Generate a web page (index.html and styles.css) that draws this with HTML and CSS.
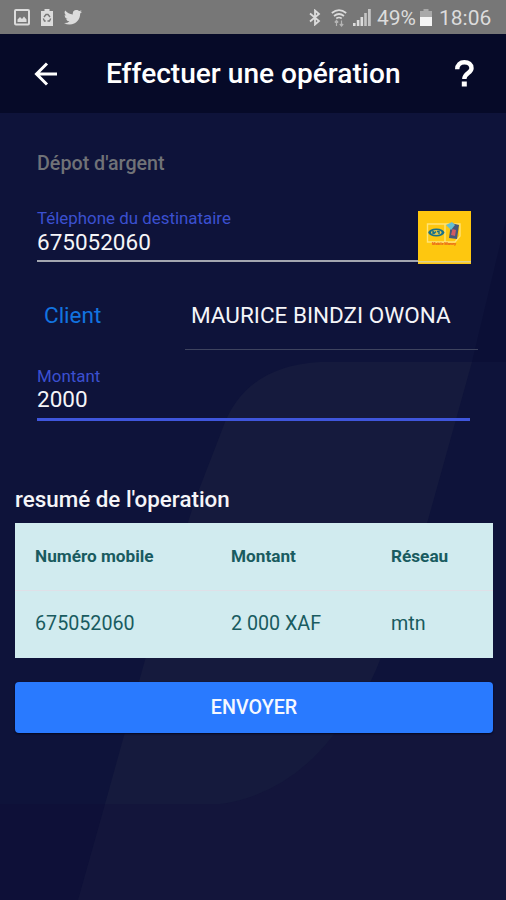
FILE: index.html
```html
<!DOCTYPE html>
<html lang="fr">
<head>
  <meta charset="utf-8">
  <title>Effectuer une opération</title>
  <link rel="stylesheet" href="styles.css">
</head>
<body>

  <svg class="backdrop" width="506" height="900" viewBox="0 0 506 900">
    <path fill="#0b0f36" d="M506 220 L472 362 H506 Z"/>
    <path fill="#0e1038" d="M0 804 H105 L78 900 H0 Z"/>
    <path fill="#13153b" d="M105 804 L145 680 L380 710 H506 V900 H78 Z"/>
    <path fill="#151a3d" d="M320 362 H472 L428 520 L380 660 Q365 700 332 737 Q286 795 220 804 H105 L145 660 L195 500 L222 430 Q244 366 320 362 Z"/>
  </svg>

  <div class="status-bar">
    <svg width="16" height="17" viewBox="0 0 16 17">
      <rect x="1" y="1" width="14" height="14.5" rx="1" fill="none" stroke="#dcdcdc" stroke-width="2"/>
      <path d="M3.5 13 V10.5 L6 8 L8 10 L10 7.5 L12.5 10.5 V13 Z" fill="#dcdcdc"/>
    </svg>
    <svg class="icon-saver" width="12" height="17" viewBox="0 0 12 17">
      <path d="M3.5 0 H8.5 V2 H12 V17 H0 V2 H3.5 Z" fill="#dcdcdc"/>
      <path d="M3 8 L5 5.5 H7 L9 8 M9.7 9.5 L8.5 12 H6.5 M4.7 12 H3.5 L2.3 9.5" fill="none" stroke="#777" stroke-width="1.4"/>
    </svg>
    <svg class="icon-bird" width="18" height="16" viewBox="0 3 24 20">
      <path d="M23.95 4.57a10 10 0 0 1-2.82.77 4.96 4.96 0 0 0 2.16-2.72c-.95.55-2 .95-3.13 1.18a4.92 4.92 0 0 0-8.38 4.48C7.69 8.09 4.07 6.13 1.64 3.16a4.92 4.92 0 0 0 1.52 6.57 4.9 4.9 0 0 1-2.23-.61v.06a4.92 4.92 0 0 0 3.95 4.83 5 5 0 0 1-2.21.08 4.94 4.94 0 0 0 4.6 3.42A9.87 9.87 0 0 1 0 19.54a14 14 0 0 0 7.55 2.21c9.05 0 14-7.5 14-13.98 0-.21 0-.42-.02-.63a9.94 9.94 0 0 0 2.46-2.55z" fill="#dcdcdc"/>
    </svg>
    <div class="status-right">
      <svg width="12" height="17" viewBox="0 0 12 17">
        <path d="M1 4.5 L10 12 L6 15.5 V1.5 L10 5 L1 12.5" fill="none" stroke="#dcdcdc" stroke-width="1.8"/>
      </svg>
      <svg class="icon-wifi" width="16" height="18" viewBox="0 0 16 18">
        <path d="M.8 4 Q8 -1.8 15.2 4 M3 7 Q8 3 13 7 M5.3 9.5 Q8 7.5 10.7 9.5" fill="none" stroke="#dcdcdc" stroke-width="1.7"/>
        <path d="M5.5 11.5 V17 M3.8 13.5 L5.5 11.5 L7.2 13.5 M10.5 11.5 V17 M8.8 15 L10.5 17 L12.2 15" fill="none" stroke="#b5b5b5" stroke-width="1.2"/>
      </svg>
      <svg class="icon-signal" width="18" height="17" viewBox="0 0 18 17">
        <path d="M0 14h2.6v3H0z M3.8 11h2.6v6H3.8z M7.5 8h2.6v9H7.5z" fill="#dcdcdc"/>
        <path d="M11.2 4h2.6v13h-2.6z M15 0h2.8v17H15z" fill="#c4c4c4"/>
      </svg>
      <span class="percent">49%</span>
      <svg class="icon-battery" width="12" height="17" viewBox="0 0 12 17">
        <path d="M3.5 0 H8.5 V2 H12 V9 H0 V2 H3.5 Z" fill="#a9a9a9"/>
        <path d="M0 8 H12 V17 H0 Z" fill="#f4f4f4"/>
      </svg>
      <span class="clock">18:06</span>
    </div>
  </div>

  <div class="toolbar">
    <svg width="24" height="24" viewBox="0 0 24 24">
      <path d="M23 12 H2.5 M13 1.5 L2.5 12 L13 22.5" fill="none" stroke="#fff" stroke-width="3"/>
    </svg>
    <h1>Effectuer une opération</h1>
    <svg class="icon-help" width="19" height="27" viewBox="0 0 19 27">
      <path d="M2.2 9.3 C2.2 4.6 5.2 2.2 9.4 2.2 C13.6 2.2 16.5 4.5 16.5 8.2 C16.5 13 9.3 13 9.3 19" fill="none" stroke="#fff" stroke-width="4.4"/>
      <rect x="6.8" y="21.5" width="5" height="5" fill="#fff"/>
    </svg>
  </div>

  <div class="form">
    <h2>Dépot d'argent</h2>

    <div class="field field-phone">
      <label>Télephone du destinataire</label>
      <div class="value">675052060</div>
      <svg class="operator" width="53" height="53" viewBox="0 0 53 53">
        <rect width="53" height="53" fill="#fec70f"/>
        <path d="M9.5 13 H42 V25 L37 31 H9.5 Z M27 13 V31" fill="none" stroke="#ffe477" stroke-width="1.4"/>
        <ellipse cx="18.3" cy="21.5" rx="8" ry="4" fill="#18708a"/>
        <ellipse cx="18.3" cy="21.5" rx="5.3" ry="2.6" fill="#e5c54a"/>
        <path d="M15 23 V20.5 L16.5 22 L18 20.5 M19 20.5 H21 V23" fill="none" stroke="#18708a" stroke-width="1.4"/>
        <path d="M33 12 L41 14 L39 28 L31 27 Z" fill="#465879"/>
        <path d="M34.5 18 L38 19 L37 25 L33 24 Z" fill="#d15a62"/>
        <path d="M28 14 L34 11 L37 14 L33 19 Z" fill="#65bfd1"/>
        <text x="14" y="34" class="operator-name" textLength="24">Mobile Money</text>
        <rect y="50" width="53" height="1.5" fill="#ded28f"/>
      </svg>
    </div>

    <div class="client">
      <span class="client-label">Client</span>
      <span class="client-name">MAURICE BINDZI OWONA</span>
    </div>

    <div class="field field-amount">
      <label>Montant</label>
      <div class="value">2000</div>
    </div>
  </div>

  <div class="summary">
    <h3>resumé de l'operation</h3>
    <table>
      <tr><th class="col-number">Numéro mobile</th><th class="col-amount">Montant</th><th>Réseau</th></tr>
      <tr><td>675052060</td><td>2 000 XAF</td><td>mtn</td></tr>
    </table>
    <button class="btn-send">ENVOYER</button>
  </div>

</body>
</html>
```

FILE: styles.css
```css
* {
  box-sizing: border-box;
}
body {
  margin: 0;
  height: 900px;
  overflow: hidden;
  background-color: #0e133a;
  color: #f5f5f8;
  font-family: Roboto, "Liberation Sans", sans-serif;
}
h1, h2, h3 {
  margin: 0;
  font-weight: 500;
  white-space: nowrap;
}
svg {
  display: block;
  flex: none;
}
.backdrop {
  position: absolute;
  top: 0;
  left: 0;
  z-index: -1;
}

.status-bar {
  display: flex;
  align-items: center;
  height: 34px;
  padding: 1px 14px 0 14px;
  background-color: #777;
  color: #dcdcdc;
}
.icon-saver {
  margin-left: 11px;
}
.icon-bird {
  margin-left: 11px;
}
.status-right {
  display: flex;
  align-items: center;
  margin-left: auto;
  font-size: 21px;
  line-height: 34px;
}
.icon-wifi {
  margin-left: 10px;
}
.icon-signal {
  margin-left: 6px;
}
.percent {
  width: 39px;
  margin-left: 6px;
}
.icon-battery {
  margin-left: 4px;
}
.clock {
  width: 53px;
  margin-left: 7px;
}

.toolbar {
  display: flex;
  align-items: center;
  height: 79px;
  padding: 0 32px 0 34px;
  background-color: #060a28;
  color: #fff;
}
.toolbar h1 {
  margin-left: 48px;
  font-size: 28.1px;
}
.icon-help {
  margin-left: auto;
}

.form {
  padding: 38px 28px 0 37px;
}
.form h2 {
  height: 57px;
  color: #707277;
  font-size: 19.7px;
  line-height: 26px;
}
.field {
  position: relative;
  width: 433px;
}
.field label {
  display: block;
  height: 20px;
  color: #3b50d0;
  font-size: 16.9px;
  line-height: 20px;
}
.value {
  font-size: 22.5px;
  line-height: 26px;
}
.field-phone {
  height: 54px;
  border-bottom: 2px solid #a3a6b0;
}
.field-phone label {
  height: 21px;
}
.field-amount {
  height: 55px;
  margin-top: 16px;
  border-bottom: 3px solid #3f56dc;
}
.operator {
  position: absolute;
  top: 3px;
  right: -1px;
}
.operator-name {
  fill: #e8541b;
  font-size: 4px;
  font-weight: 700;
}
.client {
  display: flex;
  height: 88px;
  padding: 39px 0 0 7px;
  font-size: 22.5px;
  line-height: 28px;
}
.client-label {
  width: 141px;
  color: #1274e0;
}
.client-name {
  flex: 1;
  padding-left: 6px;
  border-bottom: 1px solid #3e435e;
  white-space: nowrap;
}

.summary {
  padding: 64px 13px 0 15px;
}
.summary h3 {
  height: 38px;
  font-size: 22.4px;
  line-height: 28px;
}
table {
  width: 478px;
  height: 135px;
  border-collapse: collapse;
  table-layout: fixed;
  background-color: #d1ebef;
  color: #195b60;
}
th, td {
  padding: 0 0 0 20px;
  text-align: left;
}
th {
  height: 67px;
  border-bottom: 1px solid #dfe0e8;
  font-size: 17.2px;
}
td {
  padding-bottom: 2px;
  font-size: 19.7px;
}
.col-number {
  width: 196px;
}
.col-amount {
  width: 160px;
}
.btn-send {
  display: block;
  width: 100%;
  height: 51px;
  margin-top: 24px;
  padding: 0;
  border: 0;
  border-radius: 4px;
  background-color: #297aff;
  box-shadow: 0 1px 2px #04061f;
  color: #f5f8ff;
  font-family: inherit;
  font-size: 19.7px;
  font-weight: 500;
}
```
